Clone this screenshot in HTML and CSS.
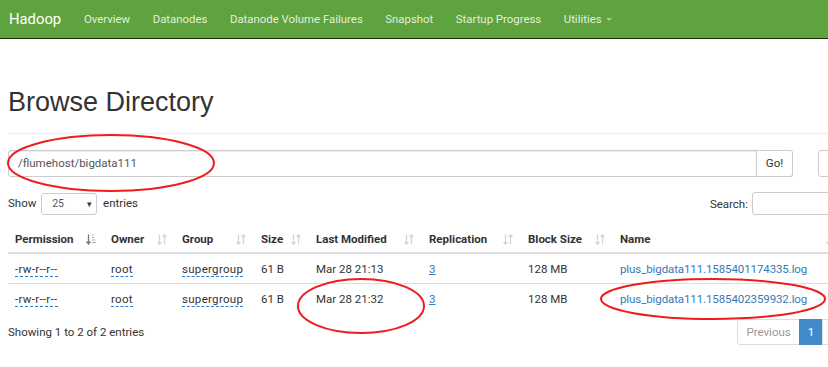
FILE: index.html
```html
<!DOCTYPE html>
<html>
<head>
<meta charset="utf-8">
<link rel="stylesheet" href="styles.css">
</head>
<body>
<nav class="navbar">
  <a class="brand">Hadoop</a>
  <ul class="nav">
    <li>Overview</li>
    <li>Datanodes</li>
    <li>Datanode Volume Failures</li>
    <li>Snapshot</li>
    <li>Startup Progress</li>
    <li>Utilities <span class="caret"></span></li>
  </ul>
</nav>
<div class="container">
  <div class="page-header"><h1>Browse Directory</h1></div>
  <div class="path-row">
    <div class="input-group">
      <div class="path-input">/flumehost/bigdata111</div>
      <div class="go-btn">Go!</div>
    </div>
    <div class="icon-btn"><svg width="12" height="12" viewBox="0 0 12 12"><rect x="1" y="1" width="10" height="10" fill="#5a4410"/></svg></div>
  </div>
  <div class="dt-top">
    <div class="length">Show <span class="select">25 <span class="arrow">▾</span></span> entries</div>
    <div class="search">Search: <span class="search-input"></span></div>
  </div>
  <table class="table">
    <thead>
      <tr>
        <th>Permission<span class="sort"><svg width="10" height="11" viewBox="0 0 10 11"><path d="M2.5 0.5v9M0.5 7.5l2 2.5 2-2.5" stroke="#777" stroke-width="1.3" fill="none"/><path d="M6 1h1.6M6 3.5h2.4M6 6h3.2M6 8.5h4" stroke="#aaa" stroke-width="1.2"/></svg></span></th>
        <th>Owner<span class="sort"><svg width="10" height="11" viewBox="0 0 10 11"><path d="M2.5 0.5v9.5M0.5 8l2 2.2 2-2.2M7.5 10.5v-9.5M5.5 3l2-2.2 2 2.2" stroke="#d3d3d3" stroke-width="1.2" fill="none"/></svg></span></th>
        <th>Group<span class="sort"><svg width="10" height="11" viewBox="0 0 10 11"><path d="M2.5 0.5v9.5M0.5 8l2 2.2 2-2.2M7.5 10.5v-9.5M5.5 3l2-2.2 2 2.2" stroke="#d3d3d3" stroke-width="1.2" fill="none"/></svg></span></th>
        <th>Size<span class="sort"><svg width="10" height="11" viewBox="0 0 10 11"><path d="M2.5 0.5v9.5M0.5 8l2 2.2 2-2.2M7.5 10.5v-9.5M5.5 3l2-2.2 2 2.2" stroke="#d3d3d3" stroke-width="1.2" fill="none"/></svg></span></th>
        <th>Last Modified<span class="sort"><svg width="10" height="11" viewBox="0 0 10 11"><path d="M2.5 0.5v9.5M0.5 8l2 2.2 2-2.2M7.5 10.5v-9.5M5.5 3l2-2.2 2 2.2" stroke="#d3d3d3" stroke-width="1.2" fill="none"/></svg></span></th>
        <th>Replication<span class="sort"><svg width="10" height="11" viewBox="0 0 10 11"><path d="M2.5 0.5v9.5M0.5 8l2 2.2 2-2.2M7.5 10.5v-9.5M5.5 3l2-2.2 2 2.2" stroke="#d3d3d3" stroke-width="1.2" fill="none"/></svg></span></th>
        <th>Block Size<span class="sort"><svg width="10" height="11" viewBox="0 0 10 11"><path d="M2.5 0.5v9.5M0.5 8l2 2.2 2-2.2M7.5 10.5v-9.5M5.5 3l2-2.2 2 2.2" stroke="#d3d3d3" stroke-width="1.2" fill="none"/></svg></span></th>
        <th>Name<span class="sort"><svg width="10" height="11" viewBox="0 0 10 11"><path d="M2.5 0.5v9.5M0.5 8l2 2.2 2-2.2M7.5 10.5v-9.5M5.5 3l2-2.2 2 2.2" stroke="#d3d3d3" stroke-width="1.2" fill="none"/></svg></span></th>
      </tr>
    </thead>
    <tbody>
      <tr>
        <td><span class="dash">-rw-r--r--</span></td>
        <td><span class="dash">root</span></td>
        <td><span class="dash">supergroup</span></td>
        <td>61 B</td>
        <td>Mar 28 21:13</td>
        <td><span class="rep">3</span></td>
        <td>128 MB</td>
        <td><span class="link">plus_bigdata111.1585401174335.log</span></td>
      </tr>
      <tr>
        <td><span class="dash">-rw-r--r--</span></td>
        <td><span class="dash">root</span></td>
        <td><span class="dash">supergroup</span></td>
        <td>61 B</td>
        <td>Mar 28 21:32</td>
        <td><span class="rep">3</span></td>
        <td>128 MB</td>
        <td><span class="link">plus_bigdata111.1585402359932.log</span></td>
      </tr>
    </tbody>
  </table>
  <div class="dt-bottom">
    <div class="info">Showing 1 to 2 of 2 entries</div>
    <div class="pagination"><span class="page prev">Previous</span><span class="page current">1</span><span class="page next">Next</span></div>
  </div>
</div>
<svg class="annot" width="828" height="367" viewBox="0 0 828 367">
  <ellipse cx="111" cy="163" rx="103" ry="28" fill="none" stroke="#ee1c1c" stroke-width="2"/>
  <ellipse cx="361" cy="306" rx="63" ry="27" fill="none" stroke="#ee1c1c" stroke-width="2"/>
  <ellipse cx="713" cy="299" rx="112" ry="20" fill="none" stroke="#ee1c1c" stroke-width="2"/>
</svg>
</body>
</html>
```

FILE: styles.css
```css
html, body {
  margin: 0;
  padding: 0;
  overflow: hidden;
  background: #fff;
}
body {
  font-family: Roboto, "Liberation Sans", sans-serif;
  font-size: 11.5px;
  color: #333;
  width: 828px;
  height: 367px;
  position: relative;
}
.navbar {
  height: 39px;
  background: #5fa33e;
  border-bottom: 1px solid #17300f;
  display: flex;
  align-items: center;
  box-sizing: border-box;
}
.brand {
  color: #fff;
  font-size: 14.8px;
  padding-left: 9px;
  width: 75px;
}
.nav {
  list-style: none;
  margin: 0;
  padding: 0;
  display: flex;
  gap: 22.5px;
}
.nav li {
  color: #e3eedd;
  font-size: 11.4px;
}
.caret {
  display: inline-block;
  width: 0;
  height: 0;
  border-left: 3.5px solid transparent;
  border-right: 3.5px solid transparent;
  border-top: 3.5px solid #a9cc98;
  vertical-align: middle;
  margin-left: 2px;
}
.container {
  width: 840px;
  padding: 0 8px;
}
.page-header {
  border-bottom: 1px solid #eee;
  padding: 47px 0 15px;
}
h1 {
  margin: 0;
  font-family: "Liberation Sans", Arial, sans-serif;
  font-weight: 400;
  font-size: 27px;
  line-height: 32px;
  color: #333;
}
.path-row {
  display: flex;
  gap: 25px;
  margin-top: 16px;
}
.input-group {
  flex: 1;
  display: flex;
  height: 27px;
}
.path-input {
  flex: 1;
  border: 1px solid #ccc;
  border-radius: 3px 0 0 3px;
  box-shadow: inset 0 1px 1px rgba(0,0,0,.075);
  padding: 0 9px;
  line-height: 25px;
  color: #555;
}
.go-btn {
  width: 35px;
  border: 1px solid #ccc;
  border-left: none;
  border-radius: 0 3px 3px 0;
  text-align: center;
  line-height: 25px;
  color: #333;
}
.icon-btn {
  width: 30px;
  height: 27px;
  box-sizing: border-box;
  border: 1px solid #ccc;
  border-radius: 3px;
  display: flex;
  align-items: center;
  justify-content: center;
}
.dt-top {
  display: flex;
  justify-content: space-between;
  align-items: center;
  margin-top: 15px;
  height: 23px;
}
.select {
  display: inline-flex;
  justify-content: space-between;
  align-items: center;
  width: 56px;
  height: 22px;
  box-sizing: border-box;
  border: 1px solid #ccc;
  border-radius: 3px;
  padding: 0 4px 0 10px;
  font-size: 10.5px;
  color: #555;
  margin: 0 3px 0 2px;
  vertical-align: middle;
}
.arrow {
  font-size: 9px;
  color: #333;
}
.search {
  display: flex;
  align-items: center;
}
.search-input {
  display: inline-block;
  width: 96px;
  height: 23px;
  box-sizing: border-box;
  border: 1px solid #ccc;
  border-radius: 3px;
  margin-left: 4px;
}
.table {
  border-collapse: collapse;
  table-layout: fixed;
  width: 840px;
  margin-top: 11px;
}
.table th:nth-child(1) { width: 96px; }
.table th:nth-child(2) { width: 71px; }
.table th:nth-child(3) { width: 79px; }
.table th:nth-child(4) { width: 55px; }
.table th:nth-child(5) { width: 113px; }
.table th:nth-child(6) { width: 99px; }
.table th:nth-child(7) { width: 92px; }
.table th {
  box-sizing: border-box;
  text-align: left;
  font-weight: 700;
  height: 27px;
  padding: 0 7px;
  border-bottom: 2px solid #ddd;
  position: relative;
  white-space: nowrap;
}
.sort {
  position: absolute;
  right: 8px;
  top: 8px;
  line-height: 0;
}
.table th:last-child .sort {
  right: 12px;
}
.table td {
  height: 29px;
  padding: 0 7px;
  border-bottom: 1px solid #ddd;
  white-space: nowrap;
}
.table tbody tr:last-child td {
  border-bottom: none;
}
.dash {
  border-bottom: 1px dashed #2a7bd0;
  letter-spacing: 0.3px;
}
.rep {
  color: #337ab7;
  text-decoration: underline;
  text-decoration-color: #337ab7;
}
.link {
  color: #337ab7;
  letter-spacing: -0.1px;
}
.dt-bottom {
  display: flex;
  justify-content: space-between;
  align-items: center;
  margin-top: 6px;
  width: 864px;
}
.pagination {
  display: flex;
}
.page {
  border: 1px solid #ddd;
  height: 24px;
  line-height: 24px;
  padding: 0 8px;
  color: #337ab7;
  margin-left: -1px;
}
.prev {
  color: #999;
  border-radius: 3px 0 0 3px;
}
.current {
  background: #428bca;
  border-color: #428bca;
  color: #fff;
}
.next {
  padding: 0 12px;
}
.annot {
  position: absolute;
  left: 0;
  top: 0;
  pointer-events: none;
}
```
